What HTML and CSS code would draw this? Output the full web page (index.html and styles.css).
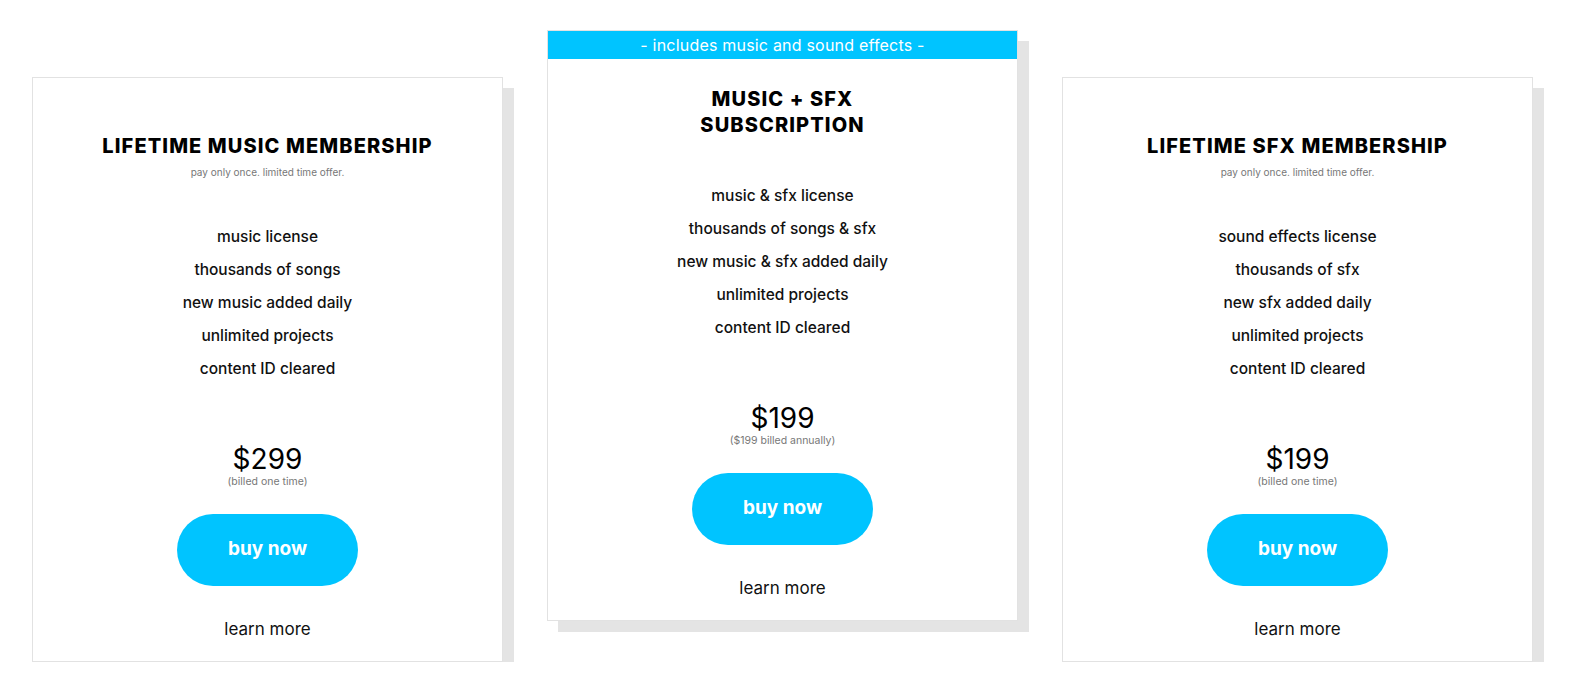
FILE: index.html
```html
<!DOCTYPE html>
<html lang="en">
<head>
<meta charset="utf-8">
<title>Pricing</title>
<link rel="stylesheet" href="styles.css">
</head>
<body>
<main class="pricing">
  <article class="plan plan--side">
    <div class="plan-body">
      <div class="plan-head">
        <h2 class="plan-title">LIFETIME MUSIC MEMBERSHIP</h2>
        <p class="plan-note">pay only once. limited time offer.</p>
      </div>
      <ul class="plan-features">
        <li>music license</li>
        <li>thousands of songs</li>
        <li>new music added daily</li>
        <li>unlimited projects</li>
        <li>content ID cleared</li>
      </ul>
      <div class="plan-price">$299</div>
      <div class="plan-billing">(billed one time)</div>
      <a class="buy-btn" href="#">buy now</a>
      <a class="learn-more" href="#">learn more</a>
    </div>
  </article>

  <article class="plan plan--featured">
    <div class="plan-banner">- includes music and sound effects -</div>
    <div class="plan-body">
      <div class="plan-head">
        <h2 class="plan-title plan-title--narrow">MUSIC + SFX SUBSCRIPTION</h2>
      </div>
      <ul class="plan-features">
        <li>music &amp; sfx license</li>
        <li>thousands of songs &amp; sfx</li>
        <li>new music &amp; sfx added daily</li>
        <li>unlimited projects</li>
        <li>content ID cleared</li>
      </ul>
      <div class="plan-price">$199</div>
      <div class="plan-billing">($199 billed annually)</div>
      <a class="buy-btn" href="#">buy now</a>
      <a class="learn-more" href="#">learn more</a>
    </div>
  </article>

  <article class="plan plan--side">
    <div class="plan-body">
      <div class="plan-head">
        <h2 class="plan-title">LIFETIME SFX MEMBERSHIP</h2>
        <p class="plan-note">pay only once. limited time offer.</p>
      </div>
      <ul class="plan-features">
        <li>sound effects license</li>
        <li>thousands of sfx</li>
        <li>new sfx added daily</li>
        <li>unlimited projects</li>
        <li>content ID cleared</li>
      </ul>
      <div class="plan-price">$199</div>
      <div class="plan-billing">(billed one time)</div>
      <a class="buy-btn" href="#">buy now</a>
      <a class="learn-more" href="#">learn more</a>
    </div>
  </article>
</main>
</body>
</html>
```

FILE: styles.css
```css
* {
  box-sizing: border-box;
}

body {
  margin: 0;
  background: #ffffff;
  font-family: "Inter", "Roboto", sans-serif;
  color: #111111;
}

.pricing {
  display: flex;
  align-items: flex-start;
  gap: 44px;
  padding: 30px 0 0 32px;
}

.plan {
  width: 471px;
  flex: 0 0 471px;
  background: #ffffff;
  border: 1px solid #e2e2e2;
  box-shadow: 11px 11px 0 #e4e4e4;
  text-align: center;
}

.plan--side {
  margin-top: 47px;
}

.plan-banner {
  height: 28px;
  line-height: 28px;
  background: #00c4ff;
  color: #ffffff;
  font-size: 16px;
  font-weight: 400;
  letter-spacing: 0.2px;
}

.plan-body {
  padding: 55px 0 22px;
}

.plan--featured .plan-body {
  padding-top: 27px;
}

.plan-title {
  margin: 0 auto;
  font-family: "Inter", sans-serif;
  font-weight: 800;
  font-size: 20px;
  line-height: 26px;
  letter-spacing: 1.1px;
  color: #000000;
}

.plan-title--narrow {
  max-width: 200px;
}

.plan-note {
  margin: 6px 0 0;
  font-size: 10px;
  line-height: 14px;
  color: #777777;
}

.plan-features {
  list-style: none;
  margin: 41px 0 0;
  padding: 0;
  font-size: 15.5px;
  font-weight: 500;
  line-height: 33px;
  color: #111111;
}

.plan-price {
  margin-top: 58px;
  font-size: 28px;
  line-height: 32px;
  font-weight: 400;
  color: #000000;
}

.plan-billing {
  font-size: 10.5px;
  line-height: 13px;
  color: #777777;
}

.buy-btn {
  display: block;
  width: 181px;
  height: 72px;
  margin: 26px auto 0;
  border-radius: 36px;
  background: #00c4ff;
  color: #ffffff;
  font-size: 19px;
  font-weight: 700;
  line-height: 70px;
  text-decoration: none;
}

.learn-more {
  display: block;
  margin-top: 33px;
  font-size: 17px;
  line-height: 20px;
  color: #111111;
  text-decoration: none;
}
```
